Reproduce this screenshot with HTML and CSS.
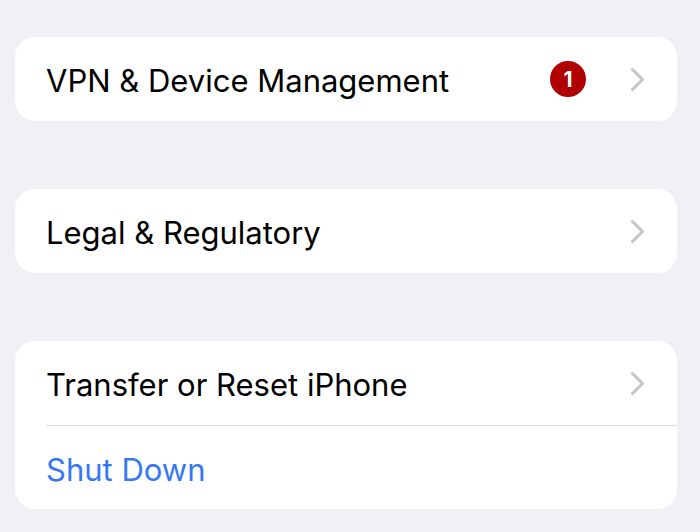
FILE: index.html
```html
<!DOCTYPE html>
<html lang="en">
<head>
    <meta charset="UTF-8">
    <meta name="viewport" content="width=device-width, initial-scale=1.0">
    <title>General</title>
    <link rel="stylesheet" href="styles.css">
</head>
<body>
    <div class="settings">
        <div class="group">
            <a href="#" class="row">
                <span class="label">VPN &amp; Device Management</span>
                <span class="badge">1</span>
                <svg class="chevron" viewBox="0 0 15 25" width="15" height="25">
                    <path d="M2.5 2.5 L12.5 12.5 L2.5 22.5" fill="none" stroke="#c4c4c7" stroke-width="3" stroke-linecap="round" stroke-linejoin="round"/>
                </svg>
            </a>
        </div>

        <div class="group">
            <a href="#" class="row">
                <span class="label">Legal &amp; Regulatory</span>
                <svg class="chevron" viewBox="0 0 15 25" width="15" height="25">
                    <path d="M2.5 2.5 L12.5 12.5 L2.5 22.5" fill="none" stroke="#c4c4c7" stroke-width="3" stroke-linecap="round" stroke-linejoin="round"/>
                </svg>
            </a>
        </div>

        <div class="group">
            <a href="#" class="row">
                <span class="label">Transfer or Reset iPhone</span>
                <svg class="chevron" viewBox="0 0 15 25" width="15" height="25">
                    <path d="M2.5 2.5 L12.5 12.5 L2.5 22.5" fill="none" stroke="#c4c4c7" stroke-width="3" stroke-linecap="round" stroke-linejoin="round"/>
                </svg>
            </a>
            <a href="#" class="row action">
                <span class="label">Shut Down</span>
            </a>
        </div>
    </div>
</body>
</html>
```

FILE: styles.css
```css
* {
    margin: 0;
    padding: 0;
    box-sizing: border-box;
    font-family: 'Inter', 'Roboto', sans-serif;
}

body {
    background-color: #f0f0f5;
}

.settings {
    display: flex;
    flex-direction: column;
    gap: 68px;
    padding: 37px 23px 20px 15px;
}

.group {
    background-color: white;
    border-radius: 20px;
    overflow: hidden;
}

.row {
    display: flex;
    align-items: center;
    height: 84px;
    margin-left: 31px;
    padding-right: 32px;
    color: #000;
    text-decoration: none;
}

.row + .row {
    border-top: 1px solid #dcdce0;
    height: 84px;
}

.label {
    flex: 1;
    font-size: 31px;
    padding-top: 3px;
}

.action .label {
    color: #3478f6;
}

.badge {
    width: 36px;
    height: 36px;
    border-radius: 50%;
    background-color: #b00000;
    color: white;
    font-size: 21px;
    font-weight: 700;
    display: flex;
    align-items: center;
    justify-content: center;
    margin-right: 44px;
}

.chevron {
    display: block;
}
```
